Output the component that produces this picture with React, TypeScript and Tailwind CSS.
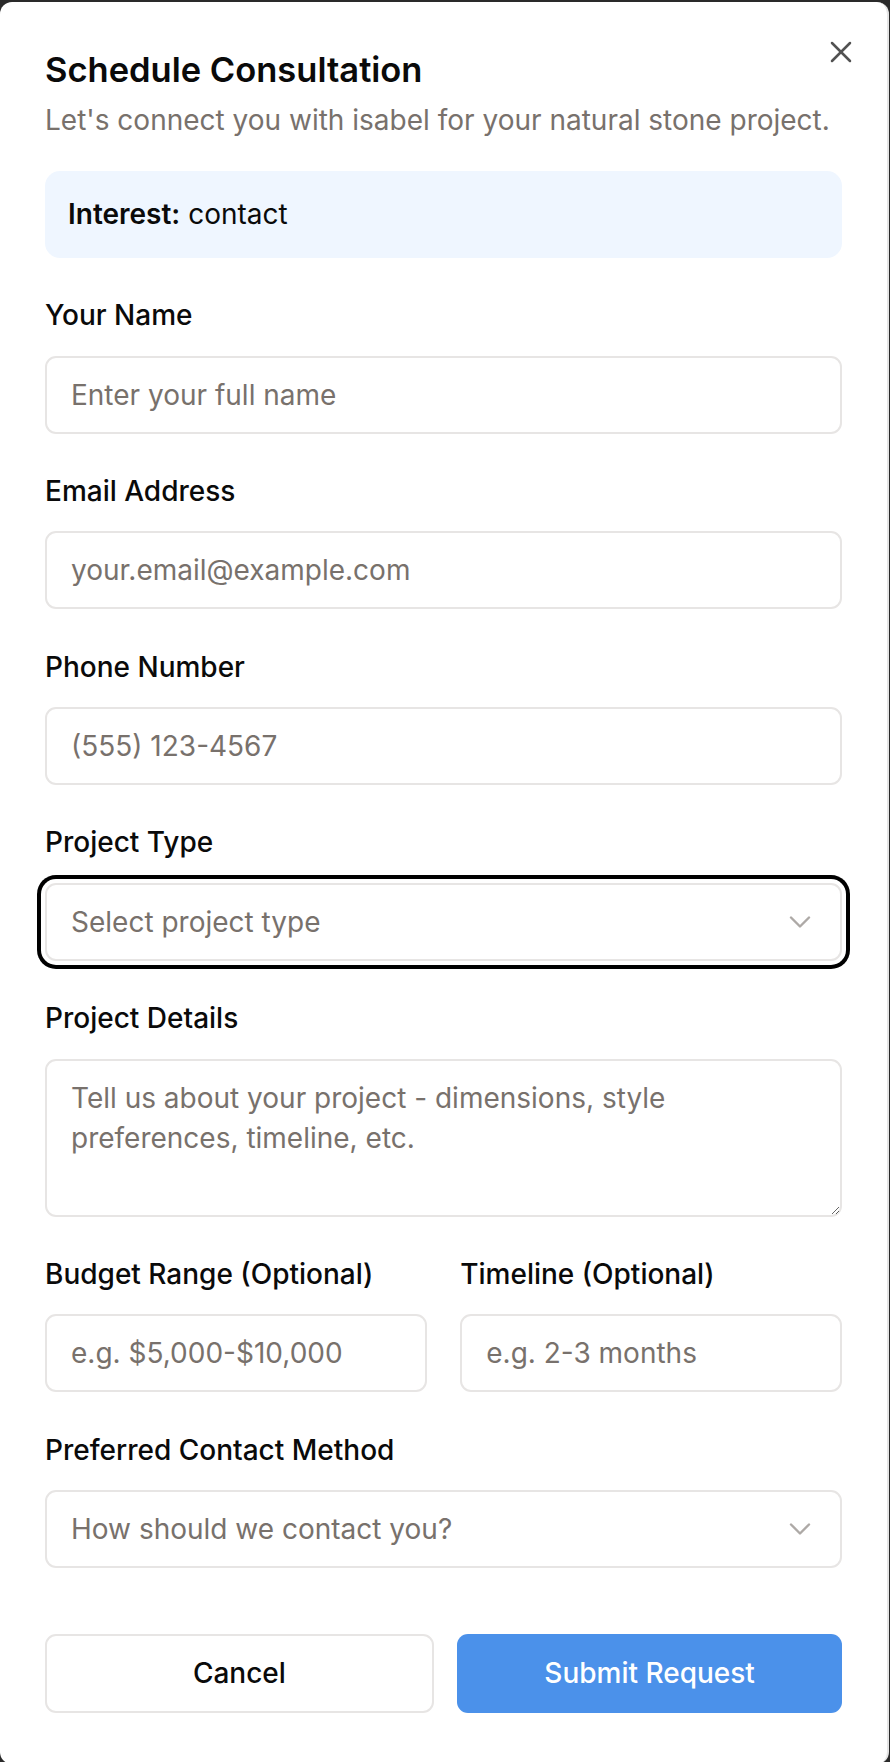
import { X, ChevronDown } from "lucide-react";

function Label({ children }: { children: React.ReactNode }) {
  return (
    <label className="block text-[28px] leading-[37.5px] font-medium text-[#0a0a0a]">
      {children}
    </label>
  );
}

function TextInput({ placeholder }: { placeholder: string }) {
  return (
    <input
      type="text"
      placeholder={placeholder}
      className="w-full h-[78px] rounded-[11px] border-[2px] border-[#e7e5e4] bg-white px-[24px] text-[28px] text-[#0a0a0a] placeholder:text-[#78716c] outline-none"
    />
  );
}

function SelectBox({ placeholder, focused }: { placeholder: string; focused?: boolean }) {
  return (
    <button
      type="button"
      className={`w-full h-[78px] rounded-[11px] border-[2px] border-[#e7e5e4] bg-white pl-[24px] pr-[22px] flex items-center justify-between text-[28px] text-[#78716c] ${
        focused ? "ring-[4px] ring-black ring-offset-[4px] ring-offset-white" : ""
      }`}
    >
      <span>{placeholder}</span>
      <ChevronDown className="w-[36px] h-[36px] text-[#78716c] opacity-60" strokeWidth={1.6} />
    </button>
  );
}

function Field({ label, children }: { label: string; children: React.ReactNode }) {
  return (
    <div className="flex flex-col gap-[21px]">
      <Label>{label}</Label>
      {children}
    </div>
  );
}

export default function App() {
  return (
    <div
      className="w-full h-[1762px] bg-[#2a2a2a] pt-[2px] pr-[1px] overflow-hidden"
      style={{ fontFamily: "Inter, 'Noto Sans', sans-serif" }}
    >
      <div className="relative h-[1762px] bg-white rounded-[12px] border-r-[2px] border-[#e5e5e5] px-[45px] pt-[51px]">
        <button
          type="button"
          className="absolute top-[32px] right-[28px] w-[36px] h-[36px] flex items-center justify-center text-[#404040] opacity-90"
          aria-label="Close"
        >
          <X className="w-[36px] h-[36px]" strokeWidth={1.7} />
        </button>

        <h2 className="text-[34.5px] leading-[34px] font-semibold text-[#0a0a0a]">
          Schedule Consultation
        </h2>
        <p className="mt-[15px] text-[28px] leading-[37.5px] text-[#78716c]">
          Let's connect you with isabel for your natural stone project.
        </p>

        <div className="mt-[31px] rounded-[15px] bg-[#eff6ff] px-[23px] py-[25px] text-[28px] leading-[37.5px] text-[#0a0a0a]">
          <span className="font-semibold">Interest:</span> contact
        </div>

        <form className="mt-[39px] flex flex-col gap-[39.3px]">
          <Field label="Your Name">
            <TextInput placeholder="Enter your full name" />
          </Field>
          <Field label="Email Address">
            <TextInput placeholder="your.email@example.com" />
          </Field>
          <Field label="Phone Number">
            <TextInput placeholder="(555) 123-4567" />
          </Field>
          <Field label="Project Type">
            <SelectBox placeholder="Select project type" focused />
          </Field>
          <Field label="Project Details">
            <textarea
              placeholder="Tell us about your project - dimensions, style preferences, timeline, etc."
              className="w-full h-[158px] rounded-[11px] border-[2px] border-[#e7e5e4] bg-white px-[24px] py-[17px] text-[28px] leading-[40.5px] text-[#0a0a0a] placeholder:text-[#78716c] outline-none"
            />
          </Field>
          <div className="grid grid-cols-2 gap-[33.5px]">
            <Field label="Budget Range (Optional)">
              <TextInput placeholder="e.g. $5,000-$10,000" />
            </Field>
            <Field label="Timeline (Optional)">
              <TextInput placeholder="e.g. 2-3 months" />
            </Field>
          </div>
          <Field label="Preferred Contact Method">
            <SelectBox placeholder="How should we contact you?" />
          </Field>

          <div className="mt-[26px] flex gap-[23.5px]">
            <button
              type="button"
              className="flex-1 h-[79px] rounded-[11px] border-[2px] border-[#e7e5e4] bg-white text-[28px] font-medium text-[#0a0a0a]"
            >
              Cancel
            </button>
            <button
              type="button"
              className="flex-1 h-[79px] rounded-[11px] bg-[#4b91ea] text-[28px] font-medium text-white"
            >
              Submit Request
            </button>
          </div>
        </form>
      </div>
    </div>
  );
}
